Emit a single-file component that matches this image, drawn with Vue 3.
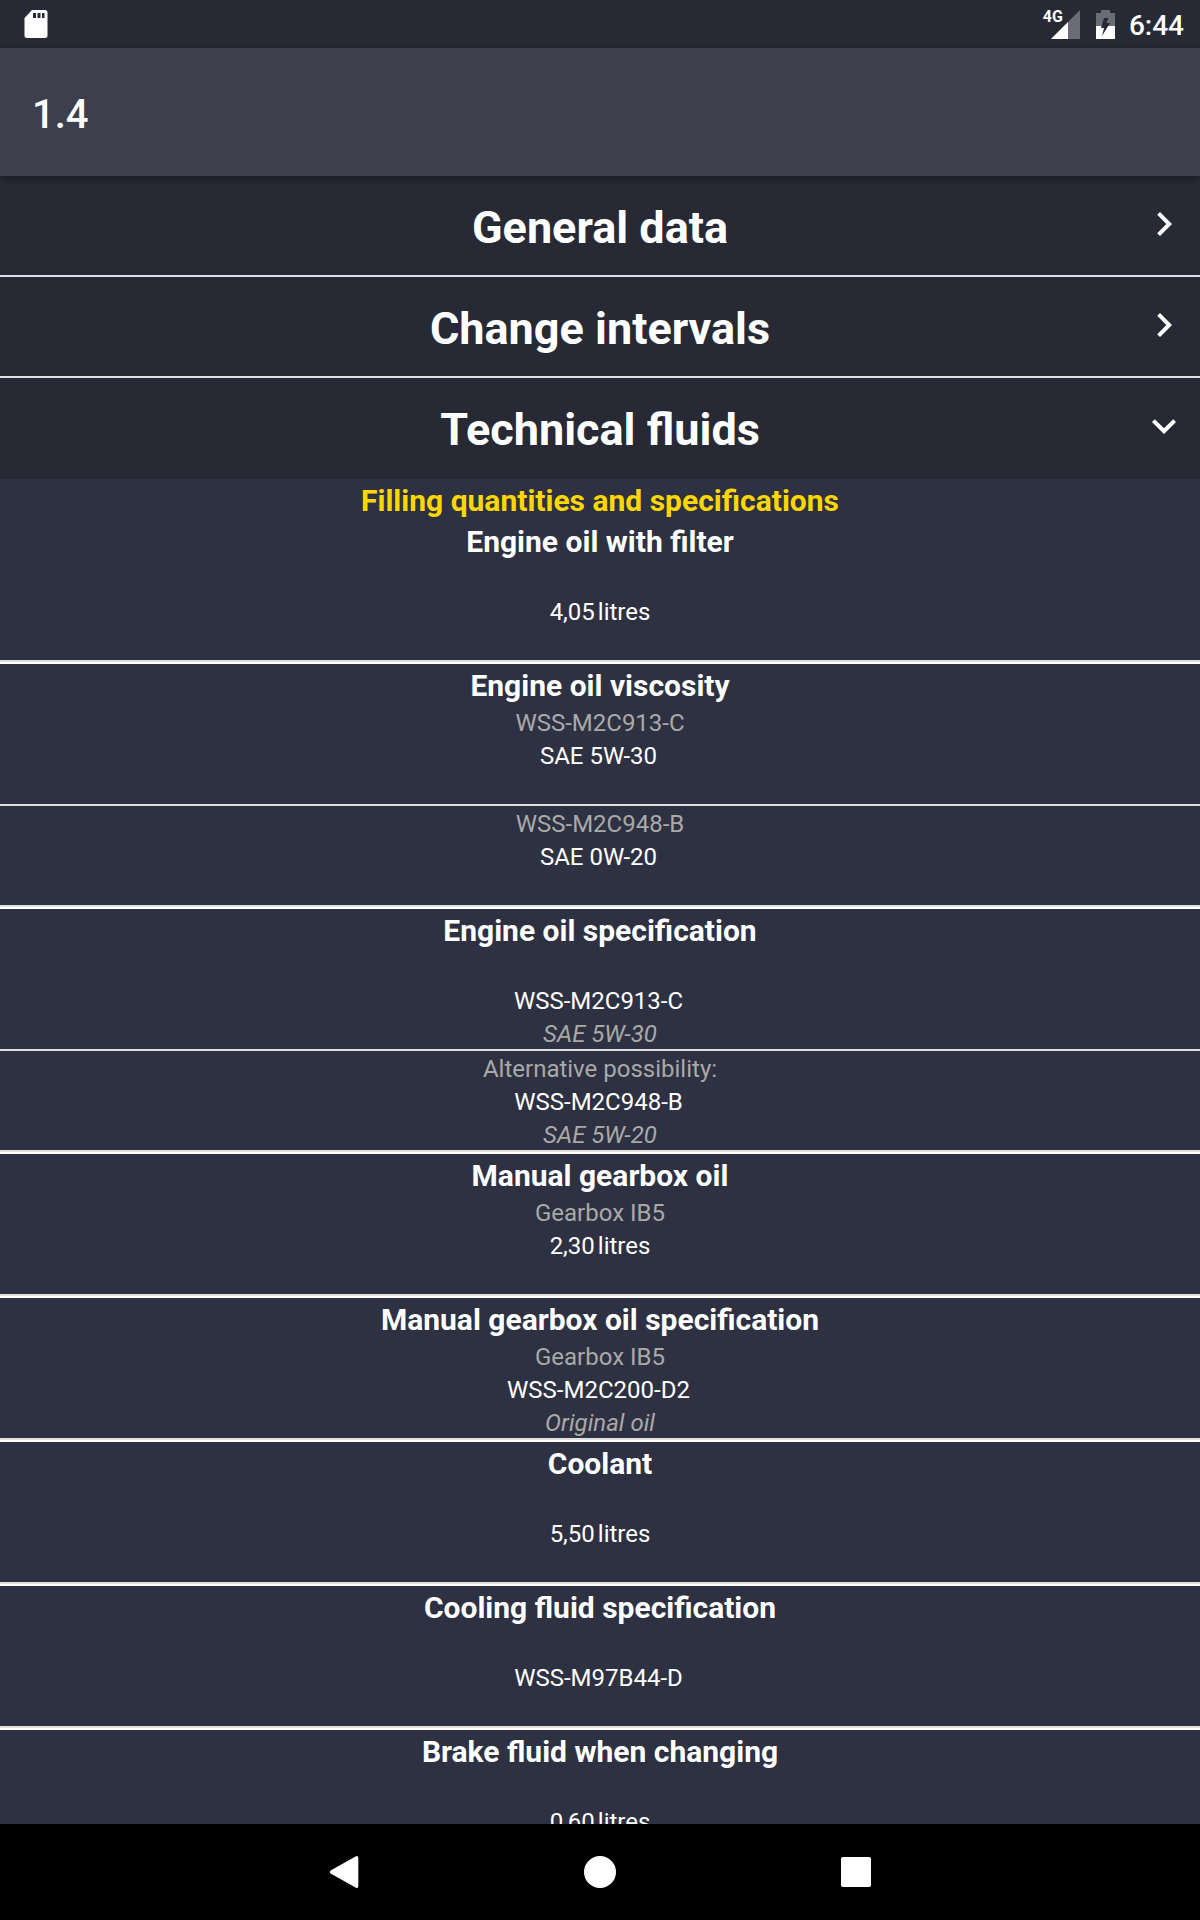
<script setup>
import { ref } from 'vue'

const version = '1.4'
const open = ref('fluids')

const sections = [
  { id: 'general', title: 'General data' },
  { id: 'intervals', title: 'Change intervals' },
  { id: 'fluids', title: 'Technical fluids' },
]

const fluids = [
  { name: 'Engine oil with filter', entries: [{ value: '4,05', unit: 'litres' }] },
  {
    name: 'Engine oil viscosity',
    entries: [
      { hint: 'WSS-M2C913-C', value: 'SAE 5W-30' },
      { hint: 'WSS-M2C948-B', value: 'SAE 0W-20' },
    ],
  },
  {
    name: 'Engine oil specification',
    entries: [
      { value: 'WSS-M2C913-C', note: 'SAE 5W-30' },
      { hint: 'Alternative possibility:', value: 'WSS-M2C948-B', note: 'SAE 5W-20' },
    ],
  },
  { name: 'Manual gearbox oil', entries: [{ hint: 'Gearbox IB5', value: '2,30', unit: 'litres' }] },
  {
    name: 'Manual gearbox oil specification',
    entries: [{ hint: 'Gearbox IB5', value: 'WSS-M2C200-D2', note: 'Original oil' }],
  },
  { name: 'Coolant', entries: [{ value: '5,50', unit: 'litres' }] },
  { name: 'Cooling fluid specification', entries: [{ value: 'WSS-M97B44-D' }] },
  { name: 'Brake fluid when changing', entries: [{ value: '0,60', unit: 'litres' }] },
]

function toggle(id) {
  open.value = open.value === id ? '' : id
}
</script>

<template>
  <div class="screen">
    <div class="status">
      <svg class="sd" width="24" height="28" viewBox="0 0 24 28" aria-hidden="true">
        <path fill="#fff" fill-rule="evenodd" d="M8 0H21Q23.500 0 23.500 2.500V25.500Q23.500 28 21 28H3Q.5 28 .5 25.500V8ZM9 3V8H12V3ZM13.500 3V8H16.500V3ZM18 3V8H20.500V3Z" />
      </svg>
      <div class="status-right">
        <span class="network">4G</span>
        <svg class="signal" width="29" height="29" viewBox="0 0 29 29" aria-hidden="true">
          <path fill="#6b6c76" d="M0 29L29 0V29Z" />
          <path fill="#fff" d="M0 29L17 12V29Z" />
        </svg>
        <svg class="battery" width="19" height="29" viewBox="0 0 19 29" aria-hidden="true">
          <path fill="#6b6c76" d="M0 16V3H5V0H14V3H19V16Z" />
          <path fill="#fff" d="M0 16H19V29H0Z" />
          <path fill="#272935" d="M8 8H12.500L10.500 13H14L6 26L8 18H5Z" />
        </svg>
        <span class="clock">6:44</span>
      </div>
    </div>

    <header class="app-bar">
      <h1>{{ version }}</h1>
    </header>

    <main class="content">
      <section v-for="section in sections" :key="section.id">
        <h2>
          <button
            class="toggle"
            :class="{ expanded: open === section.id }"
            type="button"
            :aria-expanded="open === section.id"
            @click="toggle(section.id)"
          >
            <span class="toggle-title">{{ section.title }}</span>
            <svg class="chevron" width="48" height="48" viewBox="0 0 24 24" fill="#fff" aria-hidden="true">
              <path v-if="open === section.id" d="M7.410 8.590L12 13.170l4.590-4.580L18 10l-6 6-6-6z" />
              <path v-else d="M8.590 16.590L13.170 12 8.590 7.410 10 6l6 6-6 6z" />
            </svg>
          </button>
        </h2>

        <div v-if="section.id === 'fluids' && open === 'fluids'" class="panel">
          <h3 class="heading accent">Filling quantities and specifications</h3>
          <article v-for="fluid in fluids" :key="fluid.name" class="fluid">
            <h4 class="heading">{{ fluid.name }}</h4>
            <div v-for="(entry, i) in fluid.entries" :key="i" class="entry">
              <p class="hint">{{ entry.hint }}</p>
              <p class="value"><span class="amount">{{ entry.value }}</span><span>{{ entry.unit }}</span></p>
              <p class="note">{{ entry.note }}</p>
            </div>
          </article>
        </div>
      </section>
    </main>

    <nav class="nav" aria-label="System navigation">
      <button type="button" aria-label="Back">
        <svg width="48" height="48" viewBox="0 0 48 48" fill="#fff">
          <path d="M35.500 8.600Q38.300 7 38.300 10V38Q38.300 41 35.500 39.400L11 25.800Q8.600 24 11 22.200Z" />
        </svg>
      </button>
      <button type="button" aria-label="Home">
        <svg width="48" height="48" viewBox="0 0 48 48" fill="#fff"><circle cx="24" cy="24" r="16" /></svg>
      </button>
      <button type="button" aria-label="Recent apps">
        <svg width="48" height="48" viewBox="0 0 48 48" fill="#fff"><rect x="9" y="9" width="30" height="30" rx="2" /></svg>
      </button>
    </nav>
  </div>
</template>

<style>
body {
  margin: 0;
  background: #000;
}
</style>

<style scoped>
.screen {
  display: flex;
  flex-direction: column;
  height: 100vh;
  background: #2e3142;
  color: #fff;
  font-family: Roboto, "Noto Sans", sans-serif;
}

h1,
h2,
h3,
h4,
p {
  margin: 0;
}

button {
  border: 0;
  padding: 0;
  background: none;
  color: inherit;
  font: inherit;
  cursor: pointer;
}

svg {
  display: block;
  flex: none;
}

.status {
  display: flex;
  align-items: center;
  justify-content: space-between;
  flex: none;
  height: 48px;
  padding: 0 16px 0 24px;
  background: #272935;
}

.status-right {
  display: flex;
  align-items: center;
}

.network {
  align-self: flex-start;
  margin-right: -12px;
  font-size: 16px;
  font-weight: 700;
  line-height: 22px;
}

.battery {
  margin: 0 14px 0 16px;
}

.clock {
  padding-top: 4px;
  font-size: 28px;
  font-weight: 500;
  line-height: 32px;
}

.app-bar {
  position: relative;
  display: flex;
  align-items: center;
  flex: none;
  height: 122px;
  padding: 6px 32px 0;
  background: #3d3f4c;
  box-shadow: 0 2px 8px rgba(0, 0, 0, 0.4);
}

h1 {
  font-size: 40px;
  font-weight: 500;
  line-height: 48px;
}

.content {
  flex: 1;
  min-height: 0;
  overflow-y: auto;
  scrollbar-width: none;
}

.toggle {
  display: flex;
  align-items: center;
  width: 100%;
  height: 101px;
  padding: 0 12px 0 60px;
  border-bottom: 2px solid #e0e0e0;
  background: #272935;
}

.toggle.expanded {
  border-bottom-color: #242631;
}

.toggle-title {
  flex: 1;
  padding-top: 4px;
  font-size: 45px;
  font-weight: 700;
  line-height: 52px;
  text-align: center;
}

.chevron {
  margin-bottom: 3px;
}

.panel {
  text-align: center;
}

.heading {
  padding: 3px 0 1px;
  font-size: 30px;
  font-weight: 700;
  line-height: 37px;
}

.accent {
  color: #ffd700;
}

.fluid {
  border-bottom: 2px solid #fff;
}

.entry {
  border-bottom: 2px solid #e0e0e0;
  font-size: 24px;
  line-height: 29px;
}

.entry p {
  min-height: 29px;
  padding-top: 4px;
}

.hint,
.note {
  color: #a9a9a9;
}

.note {
  font-style: italic;
}

.amount {
  margin-right: 3px;
}

.nav {
  display: flex;
  align-items: center;
  justify-content: center;
  gap: 208px;
  flex: none;
  height: 96px;
  background: #000;
}
</style>
